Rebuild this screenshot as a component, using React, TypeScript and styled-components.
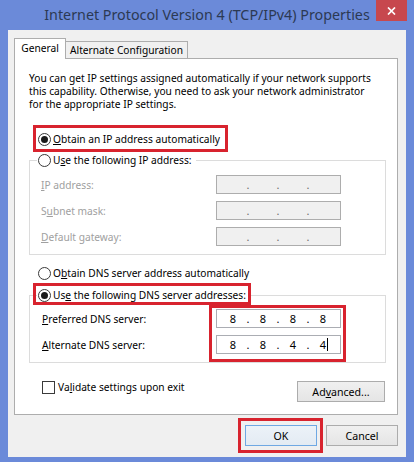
import React from "react";
import styled, { createGlobalStyle } from "styled-components";

const FONT = `"Noto Sans", "Open Sans", "Liberation Sans", sans-serif`;

const GlobalStyle = createGlobalStyle`
  html, body { margin: 0; padding: 0; background: #6b8ad9; }
  * { box-sizing: border-box; }
`;

const Window = styled.div`
  width: 414px;
  height: 462px;
  background: #6b8ad9;
  display: flex;
  flex-direction: column;
  font-family: ${FONT};
  font-size: 10.2px;
  color: #000;
`;

const TitleBar = styled.div`
  height: 30px;
  flex: none;
  display: grid;
  grid-template-columns: 1fr auto 1fr;
  align-items: start;
`;

const Title = styled.div`
  grid-column: 2;
  font-size: 14.3px;
  line-height: 30px;
  color: #2b3953;
  white-space: nowrap;
`;

const CloseButton = styled.div`
  grid-column: 3;
  justify-self: end;
  width: 31px;
  height: 21px;
  margin-right: 7px;
  background: #c7484e;
  display: flex;
  align-items: center;
  justify-content: center;
`;

const Client = styled.div`
  flex: 1;
  margin: 0 8px 5px;
  background: #f0f0f0;
  padding: 8px 8px 0 6px;
  display: flex;
  flex-direction: column;
`;

const TabStrip = styled.div`
  height: 20px;
  display: flex;
  align-items: flex-end;
  position: relative;
  z-index: 1;
`;

const Tab = styled.div<{ $active?: boolean }>`
  border: 1px solid #adadad;
  border-bottom: none;
  text-align: center;
  white-space: nowrap;
  background: ${(p) => (p.$active ? "#fff" : "#f0f0f0")};
  width: ${(p) => (p.$active ? "52px" : "122px")};
  height: ${(p) => (p.$active ? "21px" : "17px")};
  line-height: ${(p) => (p.$active ? "18px" : "16px")};
  margin-bottom: ${(p) => (p.$active ? "-1px" : "0")};
  border-left: ${(p) => (p.$active ? "1px solid #adadad" : "none")};
`;

const Panel = styled.div`
  height: 357px;
  background: #fff;
  border: 1px solid #adadad;
  padding: 13px 11px 0 14px;
  display: flex;
  flex-direction: column;
`;

const Description = styled.p`
  margin: 0;
  line-height: 13px;
  white-space: nowrap;
`;

const Highlight = styled.span<{ $inset: string }>`
  position: relative;
  display: inline-flex;
  align-self: flex-start;
  &::after {
    content: "";
    position: absolute;
    inset: ${(p) => p.$inset};
    border: 3px solid #d8232e;
    pointer-events: none;
  }
`;

const RadioRow = styled.label<{ $top?: number; $left?: number }>`
  display: inline-flex;
  align-items: center;
  gap: 2px;
  height: 16px;
  line-height: 16px;
  white-space: nowrap;
  align-self: flex-start;
  margin-top: ${(p) => p.$top ?? 0}px;
  margin-left: ${(p) => p.$left ?? 0}px;
`;

const RadioCircle = styled.span<{ $checked?: boolean }>`
  width: 13px;
  height: 13px;
  flex: none;
  border-radius: 50%;
  border: 1px solid #3a3a3a;
  background: #fff;
  display: flex;
  align-items: center;
  justify-content: center;
  &::after {
    content: "";
    width: 7px;
    height: 7px;
    border-radius: 50%;
    background: ${(p) => (p.$checked ? "#1a1a1a" : "transparent")};
  }
`;

const Key = styled.span`
  text-decoration: underline;
`;

const GroupBox = styled.fieldset<{ $top: number; $padTop: number }>`
  margin: ${(p) => p.$top}px 0 0;
  padding: ${(p) => p.$padTop}px 0 8px 0;
  border: 1px solid #dcdcdc;
  min-width: 0;
`;

const GroupLegend = styled.legend`
  margin-left: 7px;
  padding: 0 4px 0 1px;
  display: flex;
`;

const FieldGrid = styled.div`
  display: grid;
  grid-template-columns: 175px 125px;
  grid-auto-rows: 19px;
  row-gap: 7px;
  padding-left: 11px;
  align-items: center;
`;

const FieldLabel = styled.span<{ $disabled?: boolean }>`
  color: ${(p) => (p.$disabled ? "#a0a0a0" : "#000")};
  white-space: nowrap;
`;

const DnsBody = styled.div`
  display: flex;
  padding-left: 12px;
`;

const DnsLabels = styled.div`
  width: 174px;
  display: grid;
  grid-auto-rows: 19px;
  row-gap: 7px;
  align-items: center;
`;

const DnsInputs = styled.div`
  display: grid;
  grid-auto-rows: 19px;
  row-gap: 7px;
`;

const IpField = styled.div<{ $disabled?: boolean }>`
  width: 125px;
  height: 19px;
  border: 1px solid ${(p) => (p.$disabled ? "#adadad" : "#abadb3")};
  background: ${(p) => (p.$disabled ? "#f0f0f0" : "#fff")};
  color: ${(p) => (p.$disabled ? "#6d6d6d" : "#000")};
  display: flex;
  padding-left: 3px;
  line-height: 17px;
  font-size: 11px;
`;

const Seg = styled.span`
  width: 26px;
  text-align: center;
  position: relative;
`;

const Dot = styled.span`
  width: 4px;
  text-align: center;
`;

const Caret = styled.span`
  position: absolute;
  left: 17px;
  top: 2px;
  width: 1px;
  height: 13px;
  background: #000;
`;

const Footer = styled.div`
  display: flex;
  justify-content: space-between;
  align-items: flex-start;
  margin-top: 16px;
`;

const CheckRow = styled.label`
  display: inline-flex;
  align-items: center;
  gap: 3px;
  height: 16px;
  margin-left: 13px;
  white-space: nowrap;
`;

const CheckBox = styled.span`
  width: 13px;
  height: 13px;
  border: 1px solid #3a3a3a;
  background: #fff;
  flex: none;
`;

const Button = styled.button<{ $width: number; $default?: boolean }>`
  width: ${(p) => p.$width}px;
  height: 21px;
  padding: 0;
  font-family: ${FONT};
  font-size: 10.6px;
  color: #000;
  border: 1px solid ${(p) => (p.$default ? "#6fa8e3" : "#acacac")};
  background: ${(p) =>
    p.$default ? "linear-gradient(#ecf2f8, #e3ebf3)" : "linear-gradient(#f0f0f0, #e5e5e5)"};
`;

const AdvancedButton = styled(Button)`
  margin-top: 2px;
  margin-right: 1px;
`;

const ButtonRow = styled.div`
  display: flex;
  justify-content: flex-end;
  align-items: flex-start;
  gap: 9px;
  margin-top: 10px;
`;

function Radio({ checked, children }: { checked?: boolean; children: React.ReactNode }) {
  return (
    <>
      <RadioCircle $checked={checked} />
      <span>{children}</span>
    </>
  );
}

function Ip({ parts, disabled, caret }: { parts?: string[]; disabled?: boolean; caret?: boolean }) {
  const p = parts ?? ["", "", "", ""];
  return (
    <IpField $disabled={disabled}>
      <Seg>{p[0]}</Seg>
      <Dot>.</Dot>
      <Seg>{p[1]}</Seg>
      <Dot>.</Dot>
      <Seg>{p[2]}</Seg>
      <Dot>.</Dot>
      <Seg>
        {p[3]}
        {caret && <Caret />}
      </Seg>
    </IpField>
  );
}

export default function App() {
  return (
    <>
      <GlobalStyle />
      <Window>
        <TitleBar>
          <Title>Internet Protocol Version 4 (TCP/IPv4) Properties</Title>
          <CloseButton>
            <svg width="9" height="8" viewBox="0 0 9 8">
              <path d="M1 0.5 L8 7.5 M8 0.5 L1 7.5" stroke="#fff" strokeWidth="1.7" />
            </svg>
          </CloseButton>
        </TitleBar>
        <Client>
          <TabStrip>
            <Tab $active>General</Tab>
            <Tab>Alternate Configuration</Tab>
          </TabStrip>
          <Panel>
            <Description>
              You can get IP settings assigned automatically if your network supports
              <br />
              this capability. Otherwise, you need to ask your network administrator
              <br />
              for the appropriate IP settings.
            </Description>

            <Highlight $inset="-6px -8px -5px -5px" style={{ marginTop: 20, marginLeft: 9 }}>
              <RadioRow>
                <Radio checked>
                  <Key>O</Key>btain an IP address automatically
                </Radio>
              </RadioRow>
            </Highlight>

            <GroupBox $top={5} $padTop={7}>
              <GroupLegend>
                <RadioRow>
                  <Radio>
                    U<Key>s</Key>e the following IP address:
                  </Radio>
                </RadioRow>
              </GroupLegend>
              <FieldGrid>
                <FieldLabel $disabled>
                  <Key>I</Key>P address:
                </FieldLabel>
                <Ip disabled />
                <FieldLabel $disabled>
                  S<Key>u</Key>bnet mask:
                </FieldLabel>
                <Ip disabled />
                <FieldLabel $disabled>
                  <Key>D</Key>efault gateway:
                </FieldLabel>
                <Ip disabled />
              </FieldGrid>
            </GroupBox>

            <RadioRow $top={10} $left={9}>
              <Radio>
                O<Key>b</Key>tain DNS server address automatically
              </Radio>
            </RadioRow>

            <GroupBox $top={6} $padTop={6}>
              <GroupLegend>
                <Highlight $inset="-4px -5px -2px -5px">
                  <RadioRow>
                    <Radio checked>
                      Us<Key>e</Key> the following DNS server addresses:
                    </Radio>
                  </RadioRow>
                </Highlight>
              </GroupLegend>
              <DnsBody>
                <DnsLabels>
                  <FieldLabel>
                    <Key>P</Key>referred DNS server:
                  </FieldLabel>
                  <FieldLabel>
                    <Key>A</Key>lternate DNS server:
                  </FieldLabel>
                </DnsLabels>
                <Highlight $inset="-4px -5px -8px -7px">
                  <DnsInputs>
                    <Ip parts={["8", "8", "8", "8"]} />
                    <Ip parts={["8", "8", "4", "4"]} caret />
                  </DnsInputs>
                </Highlight>
              </DnsBody>
            </GroupBox>

            <Footer>
              <CheckRow>
                <CheckBox />
                <span>
                  Va<Key>l</Key>idate settings upon exit
                </span>
              </CheckRow>
              <AdvancedButton $width={88}>
                Ad<Key>v</Key>anced...
              </AdvancedButton>
            </Footer>
          </Panel>
          <ButtonRow>
            <Highlight $inset="-7px -6px -7px -7px">
              <Button $width={72} $default>
                OK
              </Button>
            </Highlight>
            <Button $width={72}>Cancel</Button>
          </ButtonRow>
        </Client>
      </Window>
    </>
  );
}
